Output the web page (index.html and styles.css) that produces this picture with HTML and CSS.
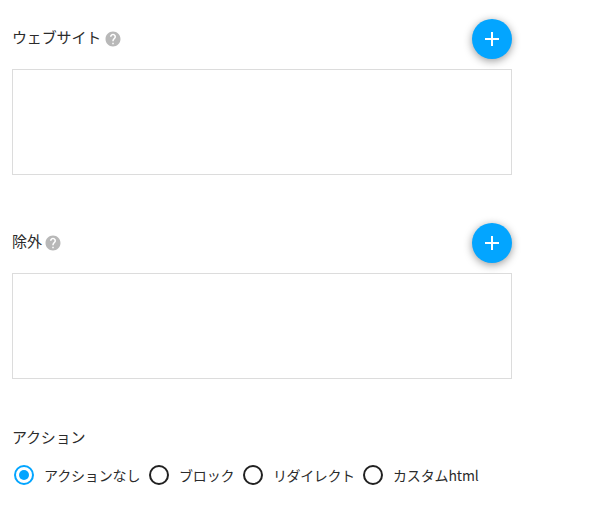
FILE: index.html
```html
<!DOCTYPE html>
<html lang="ja">
<head>
<meta charset="utf-8">
<title>ウェブサイト</title>
<link rel="stylesheet" href="styles.css">
</head>
<body>
<form class="form">
  <section class="group">
    <header class="group-head">
      <span class="label label-site">ウェブサイト</span>
      <svg class="help" viewBox="0 0 24 24"><path d="M12 2C6.480 2 2 6.480 2 12s4.480 10 10 10 10-4.480 10-10S17.520 2 12 2zm1 17h-2v-2h2v2zm2.070-7.750l-.9.920C13.450 12.900 13 13.500 13 15h-2v-.5c0-1.100.45-2.100 1.170-2.830l1.240-1.260c.37-.36.59-.86.59-1.410 0-1.100-.9-2-2-2s-2 .9-2 2H8c0-2.210 1.790-4 4-4s4 1.790 4 4c0 .88-.36 1.680-.93 2.250z"/></svg>
      <button type="button" class="add"><svg viewBox="0 0 24 24"><path d="M19 13h-6v6h-2v-6H5v-2h6V5h2v6h6v2z"/></svg></button>
    </header>
    <div class="list"></div>
  </section>
  <section class="group">
    <header class="group-head">
      <span class="label label-exclude">除外</span>
      <svg class="help" viewBox="0 0 24 24"><path d="M12 2C6.480 2 2 6.480 2 12s4.480 10 10 10 10-4.480 10-10S17.520 2 12 2zm1 17h-2v-2h2v2zm2.070-7.750l-.9.920C13.450 12.900 13 13.500 13 15h-2v-.5c0-1.100.45-2.100 1.170-2.830l1.240-1.260c.37-.36.59-.86.59-1.410 0-1.100-.9-2-2-2s-2 .9-2 2H8c0-2.210 1.790-4 4-4s4 1.790 4 4c0 .88-.36 1.680-.93 2.250z"/></svg>
      <button type="button" class="add"><svg viewBox="0 0 24 24"><path d="M19 13h-6v6h-2v-6H5v-2h6V5h2v6h6v2z"/></svg></button>
    </header>
    <div class="list"></div>
  </section>
  <section class="actions">
    <div class="label label-action">アクション</div>
    <div class="radios">
      <div class="option option-none"><span class="radio checked"></span><span class="name">アクションなし</span></div>
      <div class="option option-block"><span class="radio"></span><span class="name">ブロック</span></div>
      <div class="option option-redirect"><span class="radio"></span><span class="name">リダイレクト</span></div>
      <div class="option option-custom"><span class="radio"></span><span class="name">カスタムhtml</span></div>
    </div>
  </section>
</form>
</body>
</html>
```
FILE: styles.css
```css
* { box-sizing: border-box; }
body {
  margin: 0;
  background: #fff;
  color: #2b2b2b;
  font-family: "Noto Sans CJK JP", sans-serif;
}
.form { width: 512px; padding: 19px 0 0 12px; }
.group { height: 204px; }
.group-head { display: flex; align-items: center; height: 40px; }
.label { font-size: 15px; line-height: 20px; white-space: nowrap; }
.label-site { padding-bottom: 4px; letter-spacing: -.15px; }
.label-site + .help { margin-left: 3px; }
.label-exclude { padding-bottom: 4px; }
.label-action { letter-spacing: -.2px; }
.help { width: 18px; height: 18px; margin-left: 2px; fill: #b8b8b8; }
.add {
  display: grid;
  place-items: center;
  width: 40px;
  height: 40px;
  margin-left: auto;
  padding: 0;
  border: 0;
  border-radius: 50%;
  background: #03a5ff;
  box-shadow: 0 2px 8px rgba(0, 0, 0, .4);
}
.add svg { width: 24px; height: 24px; fill: #fff; }
.list { height: 106px; margin-top: 10px; border: 1px solid #dcdcdc; }
.radios { display: flex; align-items: center; height: 20px; margin-top: 18px; }
.option { display: flex; flex: none; align-items: center; white-space: nowrap; }
.option-none { width: 135px; margin-left: 2px; }
.option-block { width: 94px; }
.option-redirect { width: 120px; }
.radio {
  display: grid;
  flex: none;
  place-items: center;
  width: 20px;
  height: 20px;
  border: 2px solid #212121;
  border-radius: 50%;
}
.checked { border-color: #03a5ff; }
.checked::after { content: ""; width: 10px; height: 10px; border-radius: 50%; background: #03a5ff; }
.name { margin-left: 10px; font-size: 14px; line-height: 20px; letter-spacing: -.15px; }
.option-redirect .name { letter-spacing: -.4px; }
```
